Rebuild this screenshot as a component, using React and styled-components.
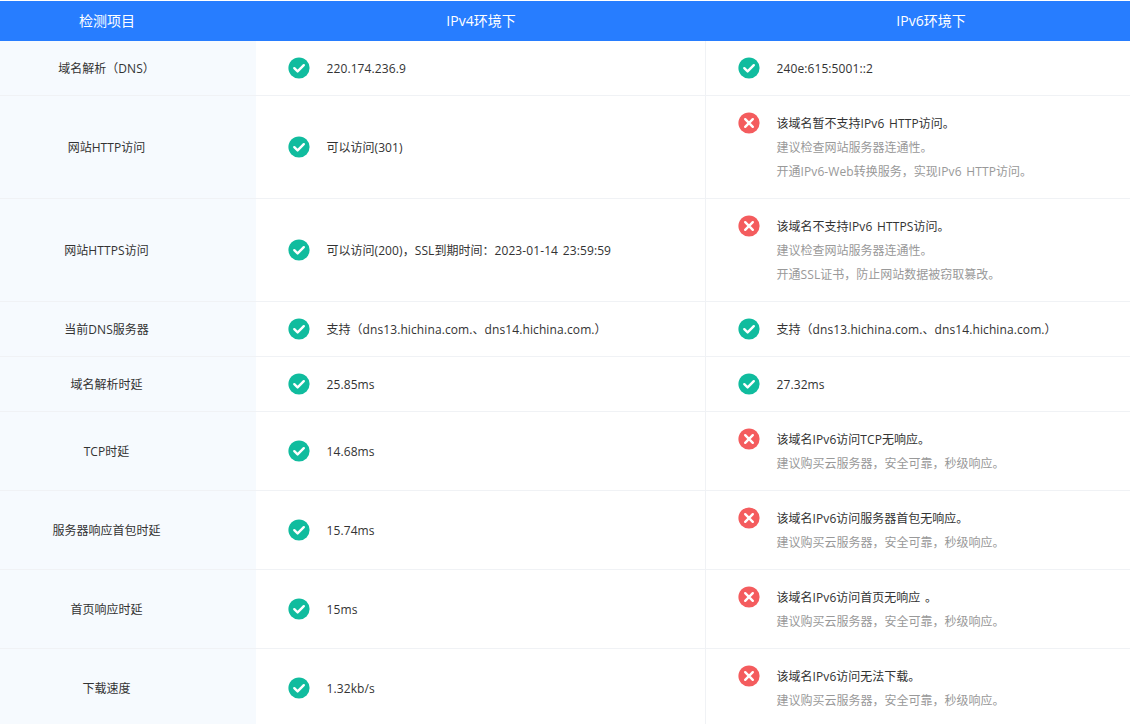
import React from "react";
import styled, { createGlobalStyle } from "styled-components";

const Global = createGlobalStyle`
  html, body { margin: 0; padding: 0; background: #fff; overflow: hidden; }
  body { font-family: "Open Sans", "Noto Sans CJK SC", sans-serif; font-size: 12px; color: #333; }
`;
const Table = styled.div`
  width: 1130px;
  height: 724px;
  padding-top: 1px;
  box-sizing: border-box;
  overflow: hidden;
`;
const Head = styled.div`
  display: grid;
  grid-template-columns: 256px 450px 450px;
  width: 1156px;
  height: 40px;
  background: #277dff;
  color: #fff;
  font-size: 14px;
  line-height: 40px;
  text-align: center;
`;
const HeadName = styled.div`
  padding-right: 42px;
`;
const Row = styled.div`
  display: grid;
  grid-template-columns: 256px 450px 450px;
  width: 1156px;
  height: ${p => p.$h}px;
  box-sizing: border-box;
  border-bottom: 1px solid #f0f2f5;
`;
const Name = styled.div`
  background: #f6fafe;
  display: flex;
  align-items: center;
  justify-content: center;
  padding-right: 43px;
  color: #333;
`;
const Cell = styled.div`
  display: flex;
  align-items: ${p => (p.$multi ? "flex-start" : "center")};
  gap: 16.5px;
  padding-left: 32px;
  ${p => p.$bordered && "border-right: 1px solid #f0f2f5;"}
  ${p => p.$multi && "padding-top: 16px;"}
`;
const Lines = styled.div`
  display: flex;
  flex-direction: column;
`;
const Line = styled.div`
  line-height: 24px;
  color: ${p => (p.$muted ? "#999" : "#333")};
`;
const Latin = styled.span`
  letter-spacing: 0.1px;
  word-spacing: 1.5px;
`;
const IconWrap = styled.svg`
  width: 22px;
  height: 22px;
  flex: none;
`;

const Txt = ({ children }) =>
  children.split(/([\x20-\x7e]+)/).map((part, i) =>
    i % 2 ? <Latin key={i}>{part}</Latin> : part
  );

const Ok = () => (
  <IconWrap viewBox="0 0 22 22">
    <circle cx="11" cy="11" r="10.6" fill="#10bc9e" />
    <path d="M6.3 11.2l3.3 3.2 6.2-6.2" fill="none" stroke="#fff" strokeWidth="2.4" strokeLinecap="round" strokeLinejoin="round" />
  </IconWrap>
);
const Bad = () => (
  <IconWrap viewBox="0 0 22 22">
    <circle cx="11" cy="11" r="10.6" fill="#f45c5e" />
    <path d="M7.2 7.2l7.6 7.6M14.8 7.2l-7.6 7.6" fill="none" stroke="#fff" strokeWidth="2.4" strokeLinecap="round" />
  </IconWrap>
);

const buy = "建议购买云服务器，安全可靠，秒级响应。";
const rows = [
  { h: 55, name: "域名解析（DNS）", v4: "220.174.236.9", v6: ["240e:615:5001::2"], ok: true },
  { h: 103, name: "网站HTTP访问", v4: "可以访问(301)", v6: ["该域名暂不支持IPv6 HTTP访问。", "建议检查网站服务器连通性。", "开通IPv6-Web转换服务，实现IPv6 HTTP访问。"] },
  { h: 103, name: "网站HTTPS访问", v4: "可以访问(200)，SSL到期时间：2023-01-14 23:59:59", v6: ["该域名不支持IPv6 HTTPS访问。", "建议检查网站服务器连通性。", "开通SSL证书，防止网站数据被窃取篡改。"] },
  { h: 55, name: "当前DNS服务器", v4: "支持（dns13.hichina.com.、dns14.hichina.com.）", v6: ["支持（dns13.hichina.com.、dns14.hichina.com.）"], ok: true },
  { h: 55, name: "域名解析时延", v4: "25.85ms", v6: ["27.32ms"], ok: true },
  { h: 79, name: "TCP时延", v4: "14.68ms", v6: ["该域名IPv6访问TCP无响应。", buy] },
  { h: 79, name: "服务器响应首包时延", v4: "15.74ms", v6: ["该域名IPv6访问服务器首包无响应。", buy] },
  { h: 79, name: "首页响应时延", v4: "15ms", v6: ["该域名IPv6访问首页无响应 。", buy] },
  { h: 79, name: "下载速度", v4: "1.32kb/s", v6: ["该域名IPv6访问无法下载。", buy] },
];

export default function App() {
  return (
    <Table>
      <Global />
      <Head>
        <HeadName>检测项目</HeadName>
        <div><Txt>IPv4环境下</Txt></div>
        <div><Txt>IPv6环境下</Txt></div>
      </Head>
      {rows.map(r => (
        <Row key={r.name} $h={r.h}>
          <Name><span><Txt>{r.name}</Txt></span></Name>
          <Cell $bordered>
            <Ok />
            <span><Txt>{r.v4}</Txt></span>
          </Cell>
          {r.ok ? (
            <Cell>
              <Ok />
              <span><Txt>{r.v6[0]}</Txt></span>
            </Cell>
          ) : (
            <Cell $multi>
              <Bad />
              <Lines>
                {r.v6.map((t, i) => (
                  <Line key={t} $muted={i > 0}><Txt>{t}</Txt></Line>
                ))}
              </Lines>
            </Cell>
          )}
        </Row>
      ))}
    </Table>
  );
}
